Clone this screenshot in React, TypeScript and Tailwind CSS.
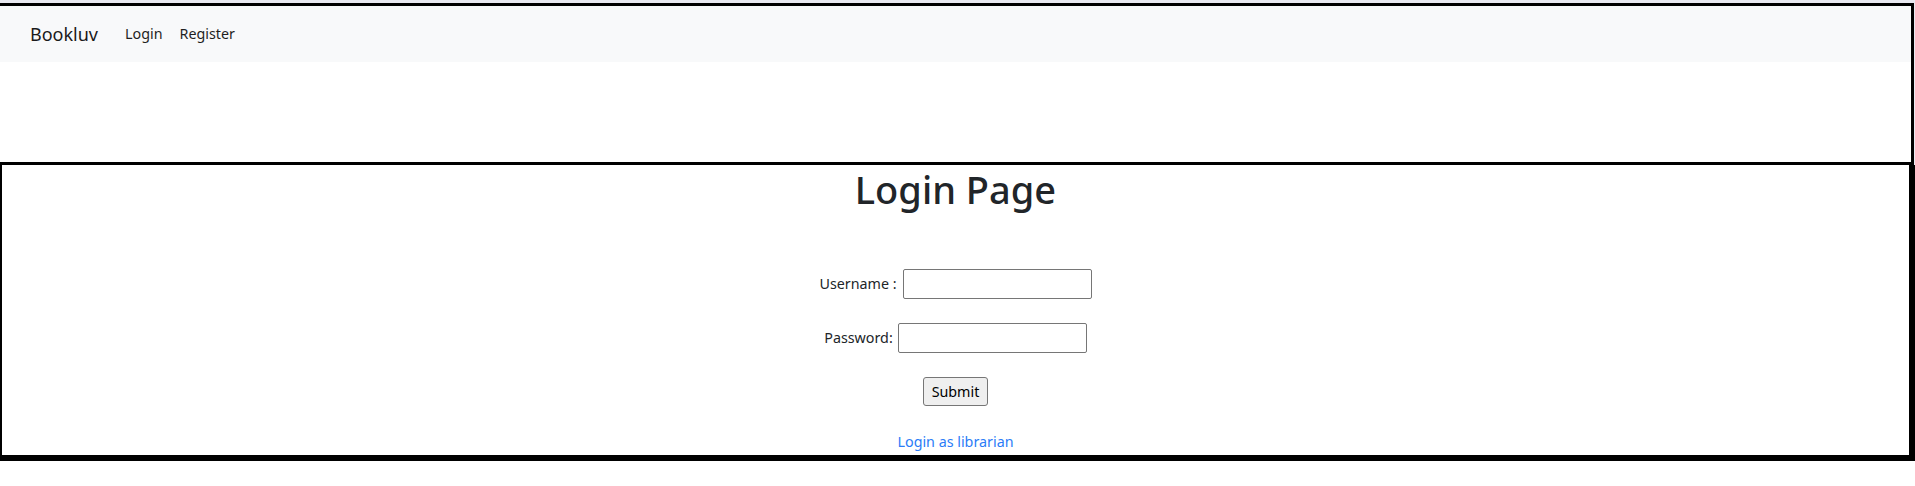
export default function App() {
  return (
    <div className="w-full bg-white font-['Noto_Sans',sans-serif] text-[#212529]">
      {/* top part with navbar */}
      <div className="bg-[#e9e9f1] pt-[3px]">
        <div className="mr-[1px] h-[162px] border-t-[3px] border-r-[3px] border-b-[3px] border-black bg-white">
          <nav className="flex h-[56px] items-center bg-[#f8f9fa] pl-[30px]">
            <span className="text-[18px] leading-[26px] text-[#1a1a1a]">Bookluv</span>
            <a className="ml-[27px] text-[14.3px] leading-[22px] text-[#1f1f1f]">Login</a>
            <a className="ml-[17px] text-[14.3px] leading-[22px] text-[#1f1f1f]">Register</a>
          </nav>
        </div>
      </div>

      {/* login box */}
      <div className="flex h-[296px] flex-col items-center border-r-[6px] border-b-[6px] border-l-2 border-black">
        <h1 className="text-[38px] font-medium leading-[48px]">Login Page</h1>

        <div className="mt-[56px] flex items-center gap-[6px] text-[14.3px]">
          <label>Username :</label>
          <input
            type="text"
            className="h-[30px] w-[189px] rounded-[2px] border border-[#767676] bg-white px-1"
          />
        </div>

        <div className="mt-[24px] flex items-center gap-[5px] text-[14.3px]">
          <label>Password:</label>
          <input
            type="password"
            className="h-[30px] w-[189px] rounded-[2px] border border-[#767676] bg-white px-1"
          />
        </div>

        <button className="mt-[24px] h-[29px] w-[65px] rounded-[3px] border border-[#767676] bg-[#efefef] text-[14.3px] leading-[20px] text-black">
          Submit
        </button>

        <a className="mt-[26px] text-[14.3px] leading-[20px] text-[#2b7cf7]">Login as librarian</a>
      </div>
    </div>
  );
}
